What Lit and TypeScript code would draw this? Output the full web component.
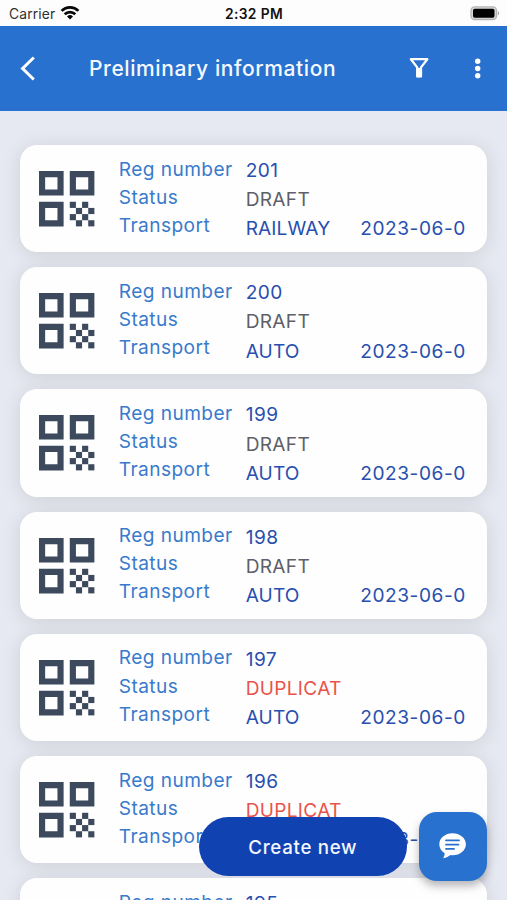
import { LitElement, html, css, svg } from "lit";
import { customElement, property } from "lit/decorators.js";

interface Declaration {
  number: string;
  status: "DRAFT" | "DUPLICAT";
  transport: string;
  date: string;
}

const declarations: Declaration[] = [
  { number: "201", status: "DRAFT", transport: "RAILWAY", date: "2023-06-0" },
  { number: "200", status: "DRAFT", transport: "AUTO", date: "2023-06-0" },
  { number: "199", status: "DRAFT", transport: "AUTO", date: "2023-06-0" },
  { number: "198", status: "DRAFT", transport: "AUTO", date: "2023-06-0" },
  { number: "197", status: "DUPLICAT", transport: "AUTO", date: "2023-06-0" },
  { number: "196", status: "DUPLICAT", transport: "AUTO", date: "2023-06-0" },
  { number: "195", status: "DUPLICAT", transport: "AUTO", date: "2023-06-0" },
];

const finderSquares = [[0, 0], [10, 0], [0, 10]];
const moduleCells = [[10, 10], [14, 10], [12, 12], [16, 12], [10, 14], [14, 14], [12, 16], [16, 16]];

@customElement("status-bar")
class StatusBar extends LitElement {
  static styles = css`
    :host {
      display: grid;
      grid-template-columns: 1fr auto 1fr;
      align-items: center;
      height: 26px;
      padding: 1px 7px 0 9px;
      box-sizing: border-box;
      background: #fdfdfe;
      color: #111;
      font-size: 13.4px;
    }
    .left { display: flex; align-items: center; gap: 5px; }
    .carrier { color: #303030; font-size: 13.8px; letter-spacing: 0.15px; }
    .wifi { width: 20px; height: 15px; margin-top: -2px; }
    .time { font-size: 13.8px; font-weight: 600; letter-spacing: 0.35px; margin-left: -1px; }
    .battery { justify-self: end; width: 31px; height: 15px; }
  `;
  render() {
    return html`
      <div class="left">
        <span class="carrier">Carrier</span>
        <svg class="wifi" viewBox="0 0 20 15">
          <g fill="none" stroke="#080808" stroke-width="2.7">
            <path d="M1.6 5.9a12 12 0 0 1 16.8 0" />
            <path d="M4.7 9.2a7.6 7.6 0 0 1 10.6 0" />
          </g>
          <path d="M10 14.6l-3-3.1a4.3 4.3 0 0 1 6 0z" fill="#080808" />
        </svg>
      </div>
      <span class="time">2:32 PM</span>
      <svg class="battery" viewBox="0 0 31 15">
        <rect x="2" y="0.9" width="25.5" height="12.6" rx="3.6" fill="#d8d8d8" stroke="#b4b4b4" stroke-width="1.3" />
        <rect x="4" y="2.7" width="21.5" height="9" rx="1.7" fill="#000" />
        <path d="M28.8 4.8q2.6 2.4 0 4.8z" fill="#aaa" />
      </svg>
    `;
  }
}

@customElement("nav-header")
class NavHeader extends LitElement {
  static styles = css`
    :host {
      display: flex;
      align-items: center;
      height: 85px;
      padding: 0 17px 0 16px;
      box-sizing: border-box;
      background: #2871ce;
      color: #f5f9ff;
    }
    svg { width: 24px; height: 30px; flex: none; margin-top: -1px; }
    .title { flex: 1; margin-left: 49px; font-size: 21px; font-weight: 500; letter-spacing: 0.6px; white-space: nowrap; }
    .more { margin-left: 35px; }
  `;
  render() {
    return html`
      <svg viewBox="0 0 24 30"><path d="M17.8 4.5L6.6 15.5 17.8 26.5" fill="none" stroke="#fff" stroke-width="3" /></svg>
      <span class="title">Preliminary information</span>
      <svg viewBox="0 0 24 30">
        <path d="M3.9 6.2h16.4L14 14.4v9h-3.8v-9z" fill="none" stroke="#fff" stroke-width="2.3" stroke-linejoin="round" />
        <path d="M9.7 15h4.8v9.2h-4.8z" fill="#fff" />
      </svg>
      <svg class="more" viewBox="0 0 24 30" fill="#fff">
        <circle cx="11.7" cy="8.3" r="2.7" /><circle cx="11.7" cy="15.5" r="2.7" /><circle cx="11.7" cy="22.7" r="2.7" />
      </svg>
    `;
  }
}

@customElement("declaration-card")
class DeclarationCard extends LitElement {
  @property({ attribute: false }) item!: Declaration;

  static styles = css`
    :host {
      display: flex;
      height: 107.2px;
      flex: none;
      box-sizing: border-box;
      padding: 0 21.5px 0 18.9px;
      border-radius: 17px;
      background: #fefefe;
      box-shadow: 0 2px 17px rgba(110, 112, 100, 0.2);
      font-size: 19.1px;
      letter-spacing: 0.45px;
      white-space: nowrap;
    }
    .code { width: 56px; height: 56px; margin-top: 26px; flex: none; fill: #3d495d; }
    .labels { width: 127px; margin: 9.7px 0 0 23.5px; line-height: 28.1px; color: #3a7acb; }
    .values { flex: 1; margin-top: 11px; line-height: 29.2px; color: #284fae; }
    .row { display: flex; justify-content: space-between; }
    .transport { letter-spacing: 0.1px; }
    .date { letter-spacing: 0.55px; }
    .draft { color: #5d6068; letter-spacing: 0.3px; }
    .duplicat { color: #ea5349; letter-spacing: 0.3px; }
  `;
  render() {
    const { number, status, transport, date } = this.item;
    return html`
      <svg class="code" viewBox="0 0 18.2 18.2">
        ${finderSquares.map(([x, y]) => svg`<path fill-rule="evenodd" d="M${x} ${y}h8v8h-8zM${x + 2} ${y + 2}v4h4v-4z" />`)}
        ${moduleCells.map(([x, y]) => svg`<rect x=${x} y=${y} width="2" height="2" />`)}
      </svg>
      <div class="labels">
        <div>Reg number</div>
        <div>Status</div>
        <div>Transport</div>
      </div>
      <div class="values">
        <div>${number}</div>
        <div class=${status.toLowerCase()}>${status}</div>
        <div class="row"><span class="transport">${transport}</span><span class="date">${date}</span></div>
      </div>
    `;
  }
}

@customElement("app-root")
class AppRoot extends LitElement {
  static styles = css`
    :host {
      display: flex;
      flex-direction: column;
      position: relative;
      height: 900px;
      overflow: hidden;
      background: #e6e9f2;
      font-family: Inter, "Liberation Sans", sans-serif;
    }
    .list {
      display: flex;
      flex-direction: column;
      flex: 1;
      min-height: 0;
      gap: 15px;
      padding: 34px 19.7px 0 20.3px;
      overflow: hidden;
    }
    .actions {
      position: absolute;
      right: 19.7px;
      bottom: 19.5px;
      display: flex;
      align-items: flex-end;
      gap: 12px;
    }
    .create {
      width: 208px;
      height: 59px;
      margin-bottom: 5px;
      padding: 2px 0 0;
      border: 0;
      border-radius: 30px;
      background: #1042b2;
      color: #f3f6fd;
      font: 500 18.7px Inter, "Liberation Sans", sans-serif;
      letter-spacing: 0.7px;
    }
    .chat {
      display: grid;
      place-items: center;
      width: 68.5px;
      height: 68.5px;
      padding: 0;
      border: 0;
      border-radius: 18px;
      background: #2871ce;
      box-shadow: 0 5px 8px rgba(50, 50, 60, 0.35);
    }
    .chat svg { width: 28px; height: 26px; }
  `;
  render() {
    return html`
      <status-bar></status-bar>
      <nav-header></nav-header>
      <main class="list">
        ${declarations.map((item) => html`<declaration-card .item=${item}></declaration-card>`)}
      </main>
      <div class="actions">
        <button class="create">Create new</button>
        <button class="chat" aria-label="Chat">
          <svg viewBox="0 0 28 26">
            <path d="M13.5 0.2C6 0.2 0.3 5.1 0.3 11.3c0 3.8 2.1 7 5.4 9-.1 1.9-.6 3.5-1.6 5 3.2-.4 5.5-1.6 7.3-3.2.7.1 1.4.2 2.1.2 7.5 0 13.4-4.8 13.4-11S21 .2 13.5 .2z" fill="#fff" />
            <path d="M7 7.3h13M7 11.6h12.5M7 15.9h8" stroke="#2871ce" stroke-width="1.8" stroke-linecap="round" />
          </svg>
        </button>
      </div>
    `;
  }
}
